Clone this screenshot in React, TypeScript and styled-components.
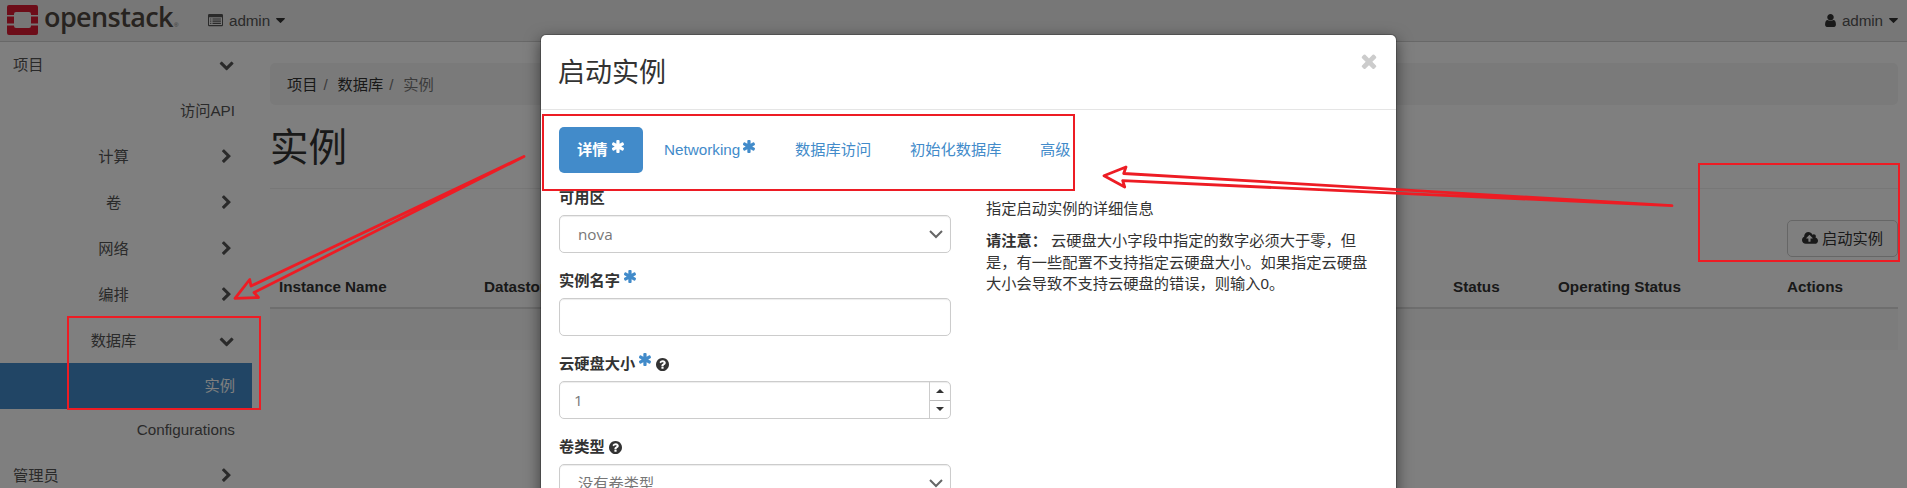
import React from 'react';
import styled, { createGlobalStyle, css } from 'styled-components';

const GlobalStyle = createGlobalStyle`
  * { box-sizing: border-box; }
  html, body { margin: 0; height: 488px; overflow: hidden; background: #fff; }
  body {
    font-family: "Liberation Sans", "Noto Sans CJK SC", sans-serif;
    font-size: 15.25px;
    line-height: 21.5px;
    color: #333;
  }
`;

const paths = {
  chevronDown:
    'M1683 808l-742 741q-19 19-45 19t-45-19l-742-741q-19-19-19-45.5t19-45.5l166-165q19-19 45-19t45 19l531 531 531-531q19-19 45-19t45 19l166 165q19 19 19 45.5t-19 45.5z',
  chevronRight:
    'M1363 877l-742 742q-19 19-45 19t-45-19l-166-166q-19-19-19-45t19-45l531-531-531-531q-19-19-19-45t19-45l166-166q19-19 45-19t45 19l742 742q19 19 19 45t-19 45z',
  asterisk:
    'M1482 1050q46 26 59.5 77.5t-12.5 97.5l-64 110q-26 46-77.5 59.5t-97.5-12.5l-266-153v307q0 52-38 90t-90 38h-128q-52 0-90-38t-38-90v-307l-266 153q-46 26-97.5 12.5t-77.5-59.5l-64-110q-26-46-12.5-97.5t59.5-77.5l266-154-266-154q-46-26-59.5-77.5t12.5-97.5l64-110q26-46 77.5-59.5t97.5 12.5l266 153v-307q0-52 38-90t90-38h128q52 0 90 38t38 90v307l266-153q46-26 97.5-12.5t77.5 59.5l64 110q26 46 12.5 97.5t-59.5 77.5l-266 154z',
  user:
    'M1536 1399q0 109-62.5 187t-150.5 78h-854q-88 0-150.5-78t-62.5-187q0-85 8.5-160.5t31.5-152 58.5-131 94-89 134.5-34.5q131 128 313 128t313-128q76 0 134.5 34.5t94 89 58.5 131 31.5 152 8.5 160.5zm-256-887q0 159-112.5 271.5t-271.5 112.5-271.5-112.5-112.5-271.5 112.5-271.5 271.5-112.5 271.5 112.5 112.5 271.5z',
  caret:
    'M1408 704q0 26-19 45l-448 448q-19 19-45 19t-45-19l-448-448q-19-19-19-45t19-45 45-19h896q26 0 45 19t19 45z',
  question:
    'M1024 1376v-192q0-14-9-23t-23-9h-192q-14 0-23 9t-9 23v192q0 14 9 23t23 9h192q14 0 23-9t9-23zm256-672q0-88-55.5-163t-138.5-116-170-41q-243 0-371 213-15 24 8 42l132 100q7 6 19 6 16 0 25-12 53-68 86-92 34-24 86-24 48 0 85.5 26t37.5 59q0 38-20 61t-68 45q-63 28-115.5 86.5t-52.5 125.5v36q0 14 9 23t23 9h192q14 0 23-9t9-23q0-19 21.5-49.5t54.5-49.5q32-18 49-28.5t46-35 44.5-48 28-60.5 12.5-81zm384 192q0 209-103 385.5t-279.5 279.5-385.5 103-385.5-103-279.5-279.5-103-385.5 103-385.5 279.5-279.5 385.5-103 385.5 103 279.5 279.5 103 385.5z',
  times:
    'M1490 1322q0 40-28 68l-136 136q-28 28-68 28t-68-28l-294-294-294 294q-28 28-68 28t-68-28l-136-136q-28-28-28-68t28-68l294-294-294-294q-28-28-28-68t28-68l136-136q28-28 68-28t68 28l294 294 294-294q28-28 68-28t68 28l136 136q28 28 28 68t-28 68l-294 294 294 294q28 28 28 68z',
  cloud:
    'M1216 864q0-14-9-23l-352-352q-9-9-23-9t-23 9l-351 351q-10 12-10 24 0 14 9 23t23 9h224v352q0 13 9.5 22.5t22.5 9.5h192q13 0 22.5-9.5t9.5-22.5v-352h224q13 0 22.5-9.5t9.5-22.5zm640 288q0 159-112.5 271.5t-271.5 112.5h-1088q-185 0-316.5-131.5t-131.5-316.5q0-130 70-240t188-165q-2-30-2-43 0-212 150-362t362-150q156 0 285.5 87t188.5 231q71-62 166-62 106 0 181 75t75 181q0 76-41 138 130 31 213.5 135.5t83.5 238.5z',
};

/* ---------- icons ---------- */

const Glyph = styled.svg<{ $w: number; $h?: number }>`
  display: block;
  flex: none;
  width: ${(p) => p.$w}px;
  height: ${(p) => p.$h ?? p.$w}px;
  fill: currentColor;
`;

type IconProps = { name: keyof typeof paths; size: number; box?: string; h?: number };
const Icon = ({ name, size, box = '0 0 1792 1792', h }: IconProps) => (
  <Glyph $w={size} $h={h} viewBox={box} aria-hidden>
    <path d={paths[name]} />
  </Glyph>
);

const ListIcon = () => (
  <Glyph $w={15} $h={13} viewBox="0 0 15 13" aria-hidden>
    <path
      fillRule="evenodd"
      d="M1.2 0h12.6a1.2 1.2 0 0 1 1.2 1.2v9.9a1.2 1.2 0 0 1-1.2 1.2H1.2A1.2 1.2 0 0 1 0 11.1V1.2A1.2 1.2 0 0 1 1.2 0zM1 3.2v7.8h13V3.2zM2.2 4.4h1.1v1.1H2.2zM4.5 4.4h8.4v1.1H4.5zM2.2 6.6h1.1v1.1H2.2zM4.5 6.6h8.4v1.1H4.5zM2.2 8.8h1.1v1.1H2.2zM4.5 8.8h8.4v1.1H4.5z"
    />
  </Glyph>
);

/* ---------- page ---------- */

const Page = styled.div`
  position: relative;
  width: 1907px;
  height: 488px;
  overflow: hidden;
`;

const Navbar = styled.header`
  display: flex;
  align-items: flex-start;
  height: 42px;
  padding: 0 9px 0 7px;
  background: #eee;
  border-bottom: 1px solid #d0d0d0;
  color: #555;
`;

const Brand = styled.div`
  display: flex;
  width: 201px;
`;

const Mark = styled.svg`
  width: 31px;
  height: 30px;
  margin-top: 5px;
`;

const Wordmark = styled.span`
  margin: 0 0 0 6px;
  font: 600 27px/34px "Open Sans", sans-serif;
  letter-spacing: -0.6px;
  color: #4f4740;
`;

const Registered = styled.span`
  margin: 15px 0 0 1px;
  font-size: 6px;
  color: #777;
`;

const NavMenu = styled.div<{ $right?: boolean }>`
  display: flex;
  align-items: center;
  height: 41px;
  gap: 6px;
  ${(p) => p.$right && css`margin-left: auto;`}
`;

const NavName = styled.span`
  letter-spacing: -0.1px;
`;

const Dark = styled.span`
  display: flex;
  color: #333;
`;

const Body = styled.div`
  display: flex;
  margin-top: -1px;
`;

const Sidebar = styled.nav`
  flex: none;
  width: 252px;
`;

type Level = 'top' | 'group' | 'leaf';
const SideRow = styled.div<{ $level: Level; $active?: boolean; $short?: boolean }>`
  display: flex;
  align-items: center;
  height: ${(p) => (p.$short ? 43 : 46)}px;
  padding: ${(p) => (p.$short ? '0 17px 1px 13px' : p.$active ? '0 17px 0 13px' : '2px 18px 0 13px')};
  color: #555;
  ${(p) => p.$level === 'group' && css`padding-left: 29px;`}
  ${(p) => p.$level === 'leaf' && css`justify-content: flex-end; padding-right: 17px;`}
  ${(p) => p.$active && css`background: #428bca; color: #fff;`}
`;

const SideLabel = styled.span<{ $level: Level }>`
  ${(p) => p.$level === 'top' && css`flex: 1;`}
  ${(p) => p.$level === 'group' && css`width: 169px; margin-right: auto; text-align: center;`}
`;

const Main = styled.main`
  flex: 1;
  padding: 22px 9px 0 18px;
`;

const Breadcrumb = styled.div`
  display: flex;
  align-items: center;
  height: 42px;
  padding: 2px 0 0 17px;
  border-radius: 5px;
  background: #f5f5f5;
`;

const Slash = styled.span`
  width: 20px;
  padding-left: 6px;
  color: #777;
`;

const Muted = styled.span`
  color: #777;
`;

const Title = styled.h1`
  height: 84px;
  margin: 0;
  padding-top: 18px;
  border-bottom: 1px solid #eee;
  font-size: 38.5px;
  font-weight: 400;
  line-height: 50px;
`;

const Actions = styled.div`
  display: flex;
  justify-content: flex-end;
  padding: 31px 0 9px;
`;

const LaunchButton = styled.button`
  display: flex;
  align-items: center;
  gap: 4px;
  width: 111px;
  height: 37px;
  padding: 0 0 0 14px;
  border: 1px solid #ccc;
  border-radius: 5px;
  background: #fff;
  color: #333;
  font: inherit;
  white-space: nowrap;
`;

const HeadRow = styled.div`
  display: grid;
  grid-template-columns: 205px 969px 105px 229px 1fr;
  align-items: center;
  height: 43px;
  padding: 0 0 0 9px;
  border-bottom: 2px solid #ddd;
  font-weight: 700;
`;

const EmptyRow = styled.div`
  height: 41px;
  background: #f9f9f9;
`;

/* ---------- modal ---------- */

const Backdrop = styled.div`
  position: absolute;
  inset: 0;
  background: rgba(0, 0, 0, 0.5);
`;

const Dialog = styled.section`
  position: absolute;
  top: 34px;
  left: 540px;
  width: 857px;
  height: 520px;
  border: 1px solid rgba(0, 0, 0, 0.2);
  border-radius: 6px;
  background: #fff;
  background-clip: padding-box;
  box-shadow: 0 5px 15px rgba(0, 0, 0, 0.5);
`;

const DialogHead = styled.div`
  display: flex;
  justify-content: space-between;
  height: 75px;
  padding: 15px 16px 0 17px;
  border-bottom: 1px solid #e5e5e5;
`;

const DialogTitle = styled.h2`
  margin: 2px 0 0;
  font-size: 27px;
  font-weight: 400;
  line-height: 42px;
`;

const Close = styled.span`
  display: flex;
  color: #ccc;
`;

const Tabs = styled.div`
  display: flex;
  padding: 17px 0 0 18px;
`;

const Tab = styled.div<{ $w: number; $active?: boolean }>`
  display: flex;
  align-items: center;
  width: ${(p) => p.$w}px;
  height: 46px;
  margin-right: 3px;
  padding-left: 18px;
  border-radius: 5px;
  color: #428bca;
  white-space: nowrap;
  ${(p) => p.$active && css`background: #428bca; color: #fff; font-weight: 700;`}
`;

const Star = styled.span<{ $gap?: number }>`
  display: flex;
  margin: -9px 0 0 ${(p) => p.$gap ?? 3}px;
  color: #428bca;
  ${Tab} & { margin-top: -8px; color: inherit; }
`;

const Columns = styled.div`
  display: flex;
`;

const Form = styled.div`
  width: 410px;
  padding: 10px 0 0 18px;
`;

const Field = styled.div`
  height: 83px;
`;

const Label = styled.div`
  display: flex;
  align-items: center;
  height: 32px;
  padding-bottom: 2px;
  font-weight: 700;
`;

const Help = styled.span`
  display: flex;
  margin-left: 4px;
`;

const Control = styled.div<{ $pad: number }>`
  display: flex;
  align-items: center;
  justify-content: space-between;
  width: 392px;
  height: 38px;
  padding-left: ${(p) => p.$pad}px;
  border: 1px solid #ccc;
  border-radius: 5px;
  box-shadow: inset 0 1px 1px rgba(0, 0, 0, 0.075);
  color: #777;
  font-family: "Open Sans", "Noto Sans CJK SC", sans-serif;
  font-size: 15.25px;
`;

const ControlText = styled.span`
  padding-top: 2px;
`;

const Arrow = styled.svg`
  width: 14px;
  height: 9px;
  margin-right: 7px;
  fill: none;
  stroke: #666;
  stroke-width: 2;
`;

const Spinner = styled.div`
  display: flex;
  flex-direction: column;
  width: 21px;
  height: 36px;
  border-left: 1px solid #ccc;
`;

const Step = styled.div<{ $up?: boolean }>`
  display: flex;
  flex: 1;
  align-items: center;
  justify-content: center;
  ${(p) => p.$up && css`border-bottom: 1px solid #bbb;`}
  &::after {
    content: '';
    border: 4px solid transparent;
    ${(p) => (p.$up ? css`border-top: 0; border-bottom-color: #333;` : css`border-bottom: 0; border-top-color: #333;`)}
  }
`;

const Notes = styled.div`
  width: 419px;
  padding: 25px 0 0 35px;
  & p { margin: 0 0 10.5px; }
`;

const Strong = styled.span`
  font-weight: 700;
  margin-right: 4px;
`;

const Markup = styled.svg`
  position: absolute;
  inset: 0;
  fill: none;
  stroke: #ed1c24;
  stroke-width: 2;
`;

const ArrowShape = styled.path`
  stroke-width: 2.8;
  stroke-linejoin: round;
`;

const side: { text: string; level: Level; open?: boolean; active?: boolean; short?: boolean }[] = [
  { text: '项目', level: 'top', open: true },
  { text: '访问API', level: 'leaf' },
  { text: '计算', level: 'group' },
  { text: '卷', level: 'group' },
  { text: '网络', level: 'group' },
  { text: '编排', level: 'group' },
  { text: '数据库', level: 'group', open: true },
  { text: '实例', level: 'leaf', active: true },
  { text: 'Configurations', level: 'leaf', short: true },
  { text: '管理员', level: 'top' },
];

const RequiredStar = ({ gap }: { gap?: number }) => (
  <Star $gap={gap}>
    <Icon name="asterisk" size={13} box="192 128 1408 1536" />
  </Star>
);

const HelpMark = () => (
  <Help>
    <Icon name="question" size={13} box="128 128 1536 1536" />
  </Help>
);

const SelectArrow = () => (
  <Arrow viewBox="0 0 14 9">
    <path d="M1 1l6 6 6-6" />
  </Arrow>
);

export default function App() {
  return (
    <Page>
      <GlobalStyle />
      <Navbar>
        <Brand>
          <Mark viewBox="0 0 31 30">
            <path
              fill="#da1a32"
              d="M2 0h27a2 2 0 0 1 2 2v8h-7V9a2 2 0 0 0-2-2H9a2 2 0 0 0-2 2v1H0V2a2 2 0 0 1 2-2zM0 11.5h7v7H0zM24 11.5h7v7h-7zM0 20.5h7V21a2 2 0 0 0 2 2h13a2 2 0 0 0 2-2v-.5h7V28a2 2 0 0 1-2 2H2a2 2 0 0 1-2-2z"
            />
          </Mark>
          <Wordmark>openstack</Wordmark>
          <Registered>®</Registered>
        </Brand>
        <NavMenu>
          <ListIcon />
          <NavName>admin</NavName>
          <Dark><Icon name="caret" size={9} h={5} box="384 640 1024 576" /></Dark>
        </NavMenu>
        <NavMenu $right>
          <Dark><Icon name="user" size={11} h={13} box="256 128 1280 1536" /></Dark>
          <NavName>admin</NavName>
          <Dark><Icon name="caret" size={9} h={5} box="384 640 1024 576" /></Dark>
        </NavMenu>
      </Navbar>

      <Body>
        <Sidebar>
          {side.map((s) => (
            <SideRow key={s.text} $level={s.level} $active={s.active} $short={s.short}>
              <SideLabel $level={s.level}>{s.text}</SideLabel>
              {s.level !== 'leaf' && <Icon name={s.open ? 'chevronDown' : 'chevronRight'} size={15.25} />}
            </SideRow>
          ))}
        </Sidebar>
        <Main>
          <Breadcrumb>
            <span>项目</span>
            <Slash>/</Slash>
            <span>数据库</span>
            <Slash>/</Slash>
            <Muted>实例</Muted>
          </Breadcrumb>
          <Title>实例</Title>
          <Actions>
            <LaunchButton>
              <Icon name="cloud" size={16} h={13} box="-64 128 1920 1536" />
              启动实例
            </LaunchButton>
          </Actions>
          <HeadRow>
            <span>Instance Name</span>
            <span>Datastore</span>
            <span>Status</span>
            <span>Operating Status</span>
            <span>Actions</span>
          </HeadRow>
          <EmptyRow />
        </Main>
      </Body>

      <Backdrop />

      <Dialog>
        <DialogHead>
          <DialogTitle>启动实例</DialogTitle>
          <Close><Icon name="times" size={22} /></Close>
        </DialogHead>
        <Tabs>
          <Tab $w={84} $active>详情<RequiredStar gap={4} /></Tab>
          <Tab $w={128}>Networking<RequiredStar gap={3} /></Tab>
          <Tab $w={112}>数据库访问</Tab>
          <Tab $w={127}>初始化数据库</Tab>
          <Tab $w={70}>高级</Tab>
        </Tabs>
        <Columns>
          <Form>
            <Field>
              <Label>可用区</Label>
              <Control $pad={18}><ControlText>nova</ControlText><SelectArrow /></Control>
            </Field>
            <Field>
              <Label>实例名字<RequiredStar gap={4} /></Label>
              <Control $pad={14} />
            </Field>
            <Field>
              <Label>云硬盘大小<RequiredStar gap={4} /><HelpMark /></Label>
              <Control $pad={14}>
                <ControlText>1</ControlText>
                <Spinner>
                  <Step $up />
                  <Step />
                </Spinner>
              </Control>
            </Field>
            <Field>
              <Label>卷类型<HelpMark /></Label>
              <Control $pad={18}><ControlText>没有卷类型</ControlText><SelectArrow /></Control>
            </Field>
          </Form>
          <Notes>
            <p>指定启动实例的详细信息</p>
            <p>
              <Strong>请注意：</Strong>
              云硬盘大小字段中指定的数字必须大于零，但是，有一些配置不支持指定云硬盘大小。如果指定云硬盘大小会导致不支持云硬盘的错误，则输入0。
            </p>
          </Notes>
        </Columns>
      </Dialog>

      <Markup width="1907" height="488" viewBox="0 0 1907 488">
        <rect x="543" y="115" width="531" height="75" />
        <rect x="68" y="317" width="192" height="92" />
        <rect x="1699" y="164" width="200" height="97" />
        <ArrowShape d="M524 156.500L251 286 249.700 279.500 235 298.300 258.500 297.500 254 292.500z" />
        <ArrowShape d="M1672 205.700L1123.700 173.500 1126 167 1104 175.800 1124.700 187 1122.700 180.700z" />
      </Markup>
    </Page>
  );
}
